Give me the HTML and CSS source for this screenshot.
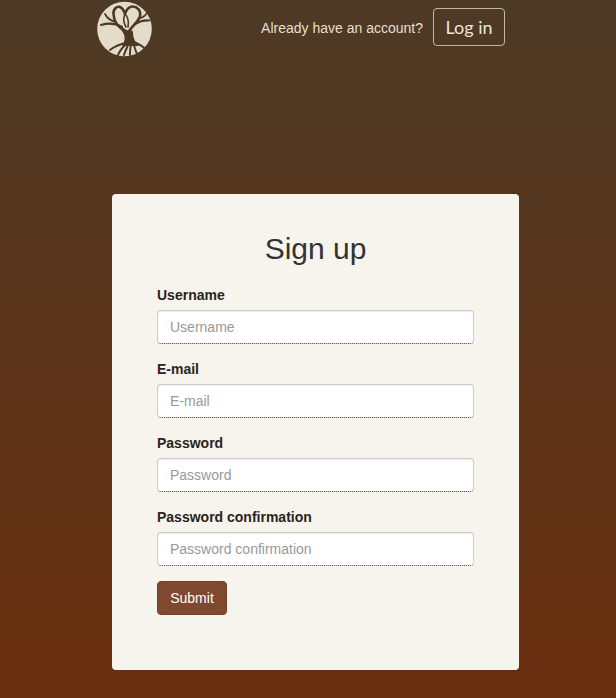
FILE: index.html
```html
<!DOCTYPE html>
<html lang="en">
<head>
<meta charset="utf-8">
<title>Sign up</title>
<link rel="stylesheet" href="styles.css">
</head>
<body>
<header class="topbar">
  <svg class="logo" viewBox="0 0 56 58" width="56" height="58" aria-label="Logo">
    <circle cx="27.5" cy="29" r="27.3" fill="#e3dccb"/>
    <g fill="none" stroke="#4d3823" stroke-linecap="round" stroke-linejoin="round">
      <path d="M27 30C20 26 17 22 16.500 14C16 9 20 6 23 7C26 8 27 11 28 14C29 10 32 6 36 6.500C41 7 44 11 43 16C42 21 37 24 32 31" stroke-width="2.6"/>
      <path d="M25 27C18 23 11 23 4 25" stroke-width="2.200"/>
      <path d="M19 22C14 21 10 18 8 14" stroke-width="1.700"/>
      <path d="M38 24C43 21 47 20 52 20.500" stroke-width="2.200"/>
      <path d="M41 19C45 18 48 16 50 13" stroke-width="1.700"/>
      <path d="M28 14C26 18 26 22 29 27" stroke-width="1.600"/>
      <path d="M28 14C31 17 32 21 31 27" stroke-width="1.600"/>
      <path d="M29 43C23 44 17 47 13 50" stroke-width="2"/>
      <path d="M37 42C42 44 47 47 50 51" stroke-width="2"/>
      <path d="M29 44C26 47 23 50 21 55" stroke-width="2"/>
      <path d="M31 45C30 48 28 51 27 55" stroke-width="2"/>
      <path d="M34 45C33 48 33 51 33 55" stroke-width="2"/>
      <path d="M37 44C37 48 39 51 40 54" stroke-width="2"/>
    </g>
    <path d="M21 26C25 31 27 33 27.500 37C28 40 27 43 25 46L42 46C38 42 36 38 36 33C36 31 35 30 33 30C30 31 27 29 24 26Z" fill="#4d3823"/>
  </svg>
  <div class="account">
    <span class="account-text">Already have an account?</span>
    <a class="login" href="#">Log in</a>
  </div>
</header>
<main class="card">
  <h1 class="title">Sign up</h1>
  <form class="form">
    <div class="field">
      <label class="label" for="u">Username</label>
      <input class="input" id="u" type="text" placeholder="Username">
    </div>
    <div class="field">
      <label class="label" for="e">E-mail</label>
      <input class="input" id="e" type="text" placeholder="E-mail">
    </div>
    <div class="field">
      <label class="label" for="p">Password</label>
      <input class="input" id="p" type="password" placeholder="Password">
    </div>
    <div class="field">
      <label class="label" for="c">Password confirmation</label>
      <input class="input" id="c" type="password" placeholder="Password confirmation">
    </div>
    <button class="submit" type="button">Submit</button>
  </form>
</main>
</body>
</html>
```
FILE: styles.css
```css
* { box-sizing: border-box; }
html, body { margin: 0; height: 698px; overflow: hidden; }
body {
  background: linear-gradient(to bottom, #4d3a25 0%, #692e0e 100%);
  font-family: "Liberation Sans", Arial, sans-serif;
  font-size: 14px;
  color: #2a2320;
}
.topbar {
  height: 194px;
  padding: 0 111px 0 97px;
  display: flex;
  justify-content: space-between;
  align-items: flex-start;
}
.logo { display: block; }
.account {
  display: flex;
  align-items: center;
  gap: 10px;
  padding-top: 8px;
}
.account-text { color: #e6dfd0; font-size: 14px; padding-top: 2px; }
.login {
  display: block;
  height: 38px;
  width: 72px;
  text-align: center;
  line-height: 36px;
  border: 1px solid #bfb8aa;
  border-radius: 4px;
  color: #ece6da;
  font-family: Lato, sans-serif;
  font-size: 18px;
  text-decoration: none;
}
.card {
  width: 407px;
  height: 476px;
  margin-left: 112px;
  padding: 0 45px;
  background: #f7f4ed;
  border-radius: 4px;
}
.title {
  margin: 0;
  padding-top: 38px;
  height: 91px;
  text-align: center;
  font-size: 30px;
  line-height: 33px;
  font-weight: 400;
  color: #333333;
}
.form { display: flex; flex-direction: column; align-items: flex-start; }
.field { width: 317px; height: 74px; }
.label {
  display: block;
  height: 25px;
  font-weight: 700;
  line-height: 20px;
}
.input {
  display: block;
  width: 317px;
  height: 34px;
  padding: 6px 12px;
  border: 1px solid #cccccc;
  border-bottom: 1px dotted #333333;
  border-radius: 4px;
  background: #ffffff;
  box-shadow: inset 0 1px 1px rgba(0,0,0,.075);
  font-family: inherit;
  font-size: 14px;
  color: #555555;
  outline: none;
}
.input::placeholder { color: #999999; opacity: 1; }
.submit {
  height: 34px;
  width: 70px;
  padding: 0;
  background: #7f492f;
  border: 1px solid #74422a;
  border-radius: 4px;
  color: #ffffff;
  font-family: inherit;
  font-size: 14px;
}
```
